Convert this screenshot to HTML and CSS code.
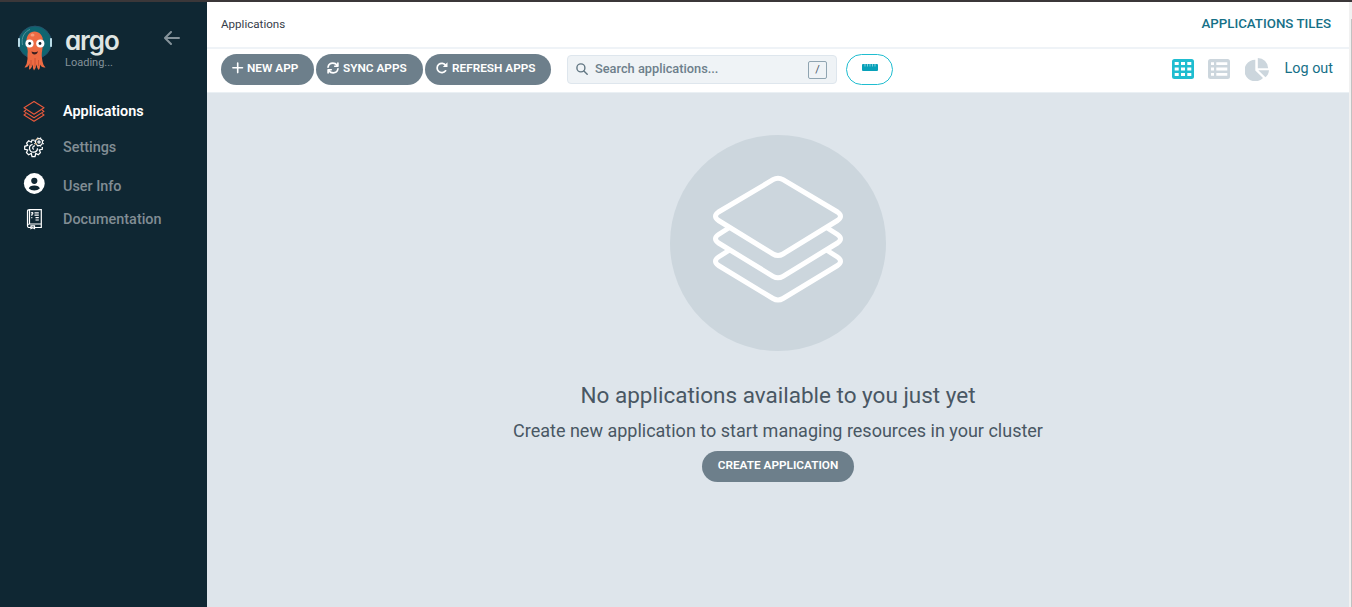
FILE: index.html
```html
<!DOCTYPE html>
<html lang="en">
<head>
<meta charset="utf-8">
<title>Applications Tiles - Argo CD</title>
<link rel="stylesheet" href="styles.css">
</head>
<body>
<div class="app">
  <aside class="sidebar">
    <div class="brand">
      <svg class="mascot" viewBox="0 0 36 46" width="36" height="46">
        <circle cx="18" cy="17.5" r="16.4" fill="#0f6570" stroke="#26506b" stroke-width="1"/>
        <path d="M5.500 20C3.800 12 8 6.500 13 4.500" fill="none" stroke="#50929b" stroke-width="1"/>
        <rect x="1" y="13" width="2" height="9" rx=".8" fill="#b8dbe7"/>
        <rect x="33" y="13" width="2" height="9" rx=".8" fill="#b8dbe7"/>
        <path d="M9.500 17C9 10.500 13 6.500 17.500 6.500S26.500 10.500 26 17C26 23 24.500 27 24.700 31L25.500 36.500Q26 40 28.500 42.500Q24.500 43 23 39.500Q23.300 43 21.800 45Q19.800 43 19.600 39.500Q18.700 44 17 45.500Q15.500 43 15.800 39.500Q14 44.500 12 44.500Q12 41 12.500 38.500Q11 43 7.500 42.500Q10.300 39 10.500 34V29C11.500 25 9.500 23 9.500 17Z" fill="#ed6b43"/>
        <path d="M14 35v6M18 33v9M21.500 35v6" stroke="#c74d30" stroke-width=".8"/>
        <ellipse cx="15.500" cy="10" rx="2" ry="1.500" fill="#f79a78"/>
        <circle cx="12.500" cy="18.500" r="4.100" fill="#fff"/><circle cx="23.300" cy="18.500" r="4.100" fill="#fff"/>
        <circle cx="12.700" cy="18.500" r="1.400" fill="#102733"/><circle cx="23" cy="18.500" r="1.400" fill="#102733"/>
        <path d="M14.500 26.500Q18 28 21 26.300Q20 29.500 17.500 29.500T14.500 26.500Z" fill="#3b1f20"/>
      </svg>
      <div class="brand-text">
        <div class="wordmark">argo</div>
        <div class="version">Loading...</div>
      </div>
      <svg class="collapse" viewBox="0 0 16 14" width="16" height="14"><path d="M7 1L1 7l6 6M1.200 7H15" fill="none" stroke="#84929a" stroke-width="2" stroke-linecap="round" stroke-linejoin="round"/></svg>
    </div>
    <nav class="nav">
      <a class="nav-item nav-apps">
        <svg viewBox="0 0 22 22" width="22" height="22" fill="none" stroke="#e9593c" stroke-width="1.100" stroke-linejoin="round"><path d="M11 1.500L21 7.800 11 14.300 1 7.800ZM3 10L1 11.400 11 17.700 21 11.400 19 10M3 13.500L1 15 11 21.300 21 15 19 13.500"/></svg>
        <span>Applications</span>
      </a>
      <a class="nav-item nav-settings">
        <svg viewBox="0 0 22 22" width="22" height="22" fill="none" stroke="#fff" stroke-width="1.250">
          <path d="M11.500 4H9L8.300 6.200 5.700 4.800 3.600 7 4.700 9.400 1.700 10.300V13.300L4.700 14 3.500 16.600 5.600 18.700 8.300 17.500 9 20.500H12L12.800 17.500 15.300 18.700 17.400 16.600 16.300 14 19.300 13.300V11"/>
          <path d="M9.600 8.300A4 4 0 1 0 14.500 12.300M12 9.800A2 2 0 0 0 10.700 13.500"/>
          <circle cx="16" cy="6" r="3.500"/><circle cx="16" cy="6" r="1.100"/>
          <path d="M14.800 1.500V2.800M17.500 1.500V2.800M11.300 5H12.600M11.300 7.500H12.600M19.500 4.500H20.800M19.500 7.500H20.800M14.800 9.300V10.500M17.500 9.300V10.500"/>
          <path d="M13.500 3.500L14.500 2.700M12.500 7L13.500 8.500" stroke="#d9a25c"/>
        </svg>
        <span>Settings</span>
      </a>
      <a class="nav-item nav-user">
        <svg viewBox="0 0 22 22" width="22" height="22"><circle cx="11.300" cy="11.500" r="10.400" fill="#fff"/><circle cx="11.300" cy="8.800" r="3.100" fill="#102733"/><path d="M5.800 16.500Q6.500 13.600 11.300 13.600T16.800 16.500Q14.600 18.500 11.300 18.500T5.800 16.500Z" fill="#102733"/></svg>
        <span>User Info</span>
      </a>
      <a class="nav-item nav-docs">
        <svg viewBox="0 0 22 22" width="22" height="22" fill="none" stroke="#fff" stroke-width="1.200"><path d="M6.500 16V1.600H18.300V16H6.500Q4.500 16 4.500 17.800T6.500 19.500H8M11.500 19.500H18.300V16M4.500 17.800V3.300Q4.500 1.600 6.500 1.600M8 17.800V20.500L9.700 19.700 11.500 20.500V17.800ZM8 5Q10 4 9.800 5.700L8.800 6.700V7.800M11.500 4.800H15.800M11.500 7.200H15.800M12.500 9.600H15.800M12.500 12H15.800M8.300 9.600H9.300"/></svg>
        <span>Documentation</span>
      </a>
    </nav>
  </aside>
  <main class="main">
    <header class="topbar">
      <span class="crumb">Applications</span>
      <span class="title">APPLICATIONS TILES</span>
    </header>
    <div class="toolbar">
      <button class="btn new"><svg viewBox="0 0 12 12" width="12" height="12"><path d="M5.700 1v9.600M.900 5.800h9.600" stroke="#fff" stroke-width="1.600" stroke-linecap="round"/></svg><span>NEW APP</span></button>
      <button class="btn sync"><svg viewBox="0 0 512 512" width="12" height="12" fill="none" stroke="#fff" stroke-width="70" stroke-linecap="round" stroke-linejoin="round"><path d="M45 220C65 110 150 50 250 50Q355 50 440 145M465 45V180H330M467 292C447 402 362 462 262 462Q157 462 72 367M47 467V332H182"/></svg><span>SYNC APPS</span></button>
      <button class="btn refresh"><svg viewBox="0 0 12 12" width="12" height="12" fill="none"><path d="M9.700 3.300A4.700 4.700 0 1 0 9.600 8.800" stroke="#fff" stroke-width="1.700" stroke-linecap="round"/><path d="M11.500.300V5H6.800Z" fill="#fff"/></svg><span>REFRESH APPS</span></button>
      <div class="search">
        <svg viewBox="0 0 12 12" width="12" height="12" fill="none" stroke="#617682" stroke-width="1.400" stroke-linecap="round"><circle cx="4.900" cy="4.900" r="4"/><path d="M7.900 7.900L11.200 11.200"/></svg>
        <span>Search applications...</span>
        <kbd>/</kbd>
      </div>
      <button class="ruler"><svg viewBox="0 0 16 7" width="16" height="7"><path d="M1 0H15Q16 0 16 1V6Q16 7 15 7H1Q0 7 0 6V1Q0 0 1 0Z" fill="#08a1b9"/><path d="M3 0V2.500M5.500 0V2.500M8 0V2.500M10.500 0V2.500M13 0V2.500" stroke="#9ddbe4" stroke-width=".8"/></svg></button>
      <div class="views">
        <svg viewBox="0 0 22 20" width="22" height="20"><rect width="22" height="20" rx="2.500" fill="#1fbdd0"/><path d="M2.700 3h4v3h-4zM9 3h4v3H9zM15.300 3h4v3h-4zM2.700 8.500h4v3h-4zM9 8.500h4v3H9zM15.300 8.500h4v3h-4zM2.700 14h4v3h-4zM9 14h4v3H9zM15.300 14h4v3h-4z" fill="#fff"/></svg>
        <svg viewBox="0 0 22 20" width="22" height="20"><rect width="22" height="20" rx="2.500" fill="#ccd6dd"/><path d="M3 3.200h3v2.800H3zM8.300 3.200H19.300v2.800H8.300zM3 8.600h3v2.800H3zM8.300 8.600H19.300v2.800H8.300zM3 14h3v2.800H3zM8.300 14H19.300v2.800H8.300z" fill="#fff"/></svg>
        <svg class="pie" viewBox="0 0 24 23" width="24" height="23" fill="#ccd6dd"><path d="M10.300 1.700V12.500L18 20A10.800 10.800 0 1 1 10.300 1.700Z"/><path d="M12.800 0A10.500 10.500 0 0 1 23.200 10.300H12.800Z"/><path d="M13.300 12.300H24Q23.700 16.700 20.500 19.300Z"/></svg>
      </div>
      <a class="logout">Log out</a>
    </div>
    <section class="content">
      <div class="empty-icon"><svg viewBox="0 0 132 128" width="132" height="128" fill="none" stroke="#fff" stroke-width="5" stroke-linejoin="round"><path d="M61 4.700Q66 1.700 71 4.700L125.500 37Q131.500 41 125.500 45.500L71 79Q66 82 61 79L6.500 45.500Q.500 41 6.500 37Z"/><path d="M17.500 52.500L6.500 59.500Q.500 63.500 6.500 68L61 101.300Q66 104.300 71 101.300L125.500 68Q131.500 63.500 125.500 59.500L114.500 52.500"/><path d="M17.500 75L6.500 82Q.500 86 6.500 90.500L61 123.500Q66 126.500 71 123.500L125.500 90.500Q131.500 86 125.500 82L114.500 75"/></svg></div>
      <h4>No applications available to you just yet</h4>
      <h5>Create new application to start managing resources in your cluster</h5>
      <button class="btn create">CREATE APPLICATION</button>
    </section>
  </main>
  <div class="scroll"><div class="thumb"></div></div>
</div>
</body>
</html>
```

FILE: styles.css
```css
* { box-sizing: border-box; }
body { margin: 0; font-family: Roboto, "Liberation Sans", sans-serif; background: #dee5eb; }
.app { display: flex; height: 607px; border-top: 2px solid #3b3739; overflow: hidden; }
.sidebar { width: 207px; flex: none; background: #0f2733; }
.brand { display: flex; padding: 23px 0 0 17px; height: 91px; }
.brand-text { margin-left: 12px; width: 99px; }
.wordmark { height: 31px; font: 600 26px/31px Inter, Lato, sans-serif; font-feature-settings: "cv11" 1; letter-spacing: -1.1px; color: #dfe5e3; }
.version { font-size: 11px; line-height: 13px; color: #84929a; }
.collapse { margin-top: 6px; }
.nav { display: flex; flex-direction: column; padding-left: 23px; }
.nav-item { display: flex; align-items: center; gap: 18px; height: 36px; font-size: 14.4px; font-weight: 500; color: #818d94; }
.nav-apps { color: #fff; font-weight: 600; letter-spacing: .02px; }
.nav-user span { padding-top: 6px; }
.main { flex: 1; display: flex; flex-direction: column; min-width: 0; }
.topbar { display: flex; justify-content: space-between; align-items: center; height: 47px; padding: 0 18px 2px 14px; border-bottom: 2px solid #eff3f7; background: #fff; }
.crumb { padding-top: 1px; font-size: 11.6px; color: #363c4a; }
.title { font-size: 13.3px; font-weight: 500; color: #167087; }
.toolbar { display: flex; align-items: center; height: 44px; padding: 0 16px 3px 14px; background: #fff; border-bottom: 1px solid #eaf0f4; }
.btn { display: flex; align-items: center; height: 31px; padding: 0 0 3px 11px; border: 0; border-radius: 16px; background: #6d7f8b; color: #fff; font: 600 11.8px/15px Roboto, sans-serif; white-space: nowrap; gap: 3px; margin-right: 2px; }
.btn span { padding-top: 1px; }
.sync, .refresh { gap: 4px; }
.new { width: 93px; }
.sync { width: 107px; }
.refresh { width: 126px; }
.search { display: flex; align-items: center; width: 270px; height: 29px; margin-left: 14px; padding: 0 9px 1px 8px; border: 1px solid #dee6ed; border-radius: 4px; background: #eff3f6; color: #6d7f8b; font-size: 12.8px; font-weight: 500; gap: 7px; }
.search kbd { margin-left: auto; margin-top: 3px; width: 19px; height: 18px; border: 1px solid #8fa4b1; border-radius: 2px; font: 11px/16px Roboto, sans-serif; text-align: center; color: #495763; }
.ruler { display: flex; justify-content: center; width: 47px; height: 31px; margin-left: 9px; padding: 9px 0 0; border: 1px solid #1fbdd0; border-radius: 16px; background: #fff; }
.views { display: flex; align-items: center; gap: 14px; margin-left: auto; }
.pie { margin-left: 1px; }
.logout { margin-left: 16px; padding-bottom: 1px; font-size: 14.4px; color: #167087; }
.content { flex: 1; display: flex; flex-direction: column; align-items: center; padding-top: 42px; color: #495763; background: #dee5eb; }
.empty-icon { display: flex; justify-content: center; width: 216px; height: 216px; padding-top: 40px; border-radius: 50%; background: #ccd6dd; }
h4, h5 { margin: 0; font-weight: 400; white-space: nowrap; }
h4 { margin-top: 28px; font-size: 22.5px; line-height: 32px; }
h5 { margin-top: 7px; font-size: 18px; line-height: 26px; }
.create { justify-content: center; width: 152px; margin: 7px 0 0; padding-left: 0; }
.scroll { display: flex; justify-content: flex-end; width: 3px; padding-top: 17px; background: #f1f1f1; }
.thumb { width: 1px; background: #c1c1c1; }
```
